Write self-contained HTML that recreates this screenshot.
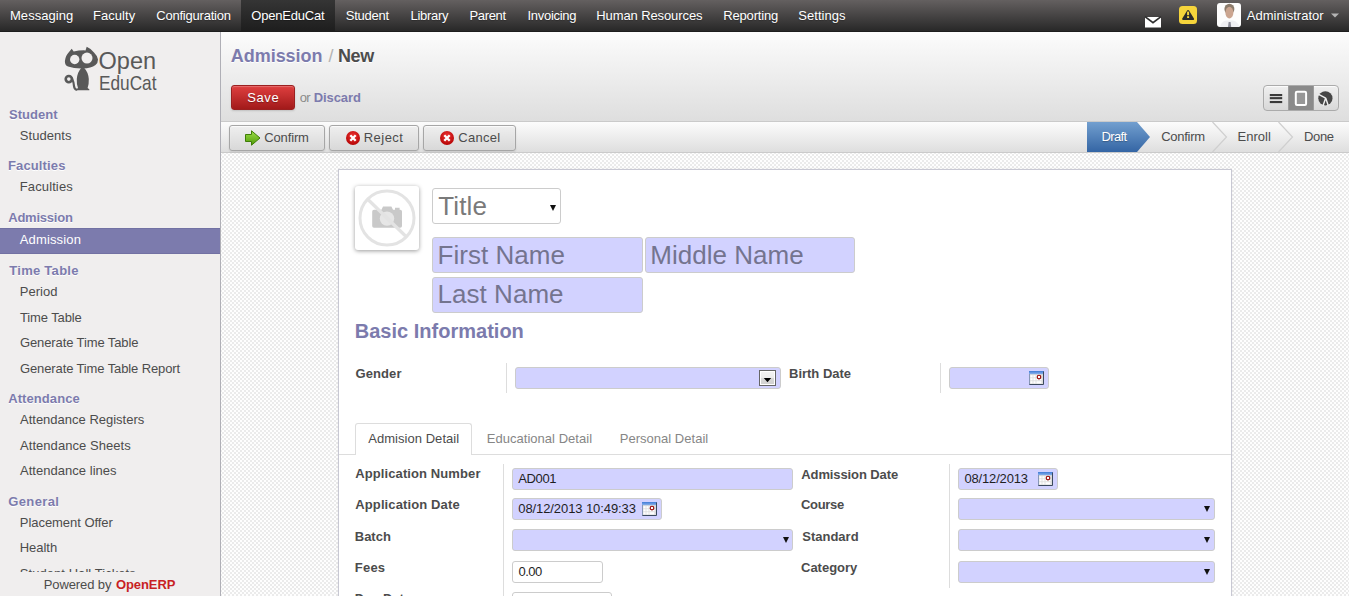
<!DOCTYPE html>
<html><head><meta charset="utf-8">
<style>
*{box-sizing:border-box;margin:0;padding:0}
html,body{width:1349px;height:596px;overflow:hidden;background:#fff;font-family:"Liberation Sans",sans-serif;font-size:13px;color:#4c4c4c}
div,svg{position:absolute}
.t{white-space:nowrap}
#top{left:0;top:0;width:1349px;height:32px;background:linear-gradient(#646060,#262626);box-shadow:inset 0 -1px 0 #1d1d1d}
#act{left:241px;top:0;width:94px;height:32px;background:linear-gradient(#353535,#1d1d1d)}
#left{left:0;top:32px;width:221px;height:564px;background:#f0eeee;border-right:1px solid #afafb6}
#sel{left:0;top:228px;width:220px;height:26px;background:#7c7bad;border-top:1px solid #7271a3;border-bottom:1px solid #7271a3}
#foot{left:0;top:572px;width:220px;height:24px;background:#f0eeee}
#hdr{left:221px;top:32px;width:1128px;height:90px;background:linear-gradient(#fcfcfc,#dedede);border-bottom:1px solid #cacaca}
#sbar{left:221px;top:122px;width:1128px;height:31px;background:linear-gradient(#fcfcfc,#dedede);border-bottom:1px solid #cacaca}
#sheetbg{left:221px;top:153px;width:1128px;height:443px;background:#fefefe}
#sheet{left:338px;top:169px;width:894px;height:440px;background:#fff;border:1px solid #c8c8d3;box-shadow:0 0 3px rgba(0,0,0,.06)}
#save{left:231px;top:85px;width:64px;height:25px;border:1px solid #9a2020;border-radius:3px;background:linear-gradient(#df3f3f,#a21a1a);box-shadow:0 1px 2px rgba(0,0,0,.15),inset 0 1px 1px rgba(255,255,255,.25)}
.btn{top:125px;height:26px;border:1px solid #a6a6a6;border-radius:3px;background:linear-gradient(#efefef,#d8d8d8);box-shadow:0 1px 2px rgba(0,0,0,.1),inset 0 1px 1px rgba(255,255,255,.8)}
#vs{left:1263px;top:85px;width:76px;height:26px;border:1px solid #ababab;border-radius:4px;background:linear-gradient(#efefef,#d8d8d8);box-shadow:inset 0 1px 1px rgba(255,255,255,.8)}
#vsa{left:1288px;top:86px;width:26px;height:24px;background:#8a8a8a;border-left:1px solid #9c9c9c;border-right:1px solid #9c9c9c}
.f{border:1px solid #ccc;border-radius:3px;background:#d2d2ff}
.w{background:#fff}
.sep{width:1px;background:#ddd}
.arr{width:0;height:0;border-left:3px solid transparent;border-right:3px solid transparent;border-top:6px solid #111}
</style></head><body>
<div id="top"></div><div id="act"></div>
<div id="left"></div><div id="sel"></div>
<!--LOGO_S--><svg width="220" height="70" style="left:0;top:35px" viewBox="0 35 220 70"><g font-family="Liberation Sans, sans-serif" fill="#595959"><text x="98.6" y="68.5" font-size="24" textLength="57.5" lengthAdjust="spacingAndGlyphs">Open</text><text x="99" y="90.4" font-size="21" textLength="57.5" lengthAdjust="spacingAndGlyphs">EduCat</text></g></svg><!--LOGO_E-->
<div id="hdr"></div><div id="sbar"></div>
<div id="sheetbg"><svg width="1128" height="443" style="left:0;top:0"><defs><pattern id="pt" x="-1" y="-1" width="4" height="4" patternUnits="userSpaceOnUse"><rect x="2" y="0" width="2" height="2" fill="#ebebeb"/><rect x="0" y="2" width="2" height="2" fill="#ebebeb"/></pattern></defs><rect width="1128" height="443" fill="url(#pt)"/></svg></div>
<div id="sheet"></div>
<div id="save"></div>
<div class="btn" style="left:229px;width:96px"></div>
<div class="btn" style="left:329px;width:90px"></div>
<div class="btn" style="left:423px;width:93px"></div>
<div id="vs"></div><div id="vsa"></div>
<!--STATE-->
<!-- form -->
<div class="w" style="left:355px;top:186px;width:64px;height:64px;border-radius:3px;box-shadow:0 1px 4px rgba(0,0,0,.4)"></div>
<!--AVATAR-->
<div class="f w" style="left:432px;top:188px;width:129px;height:36px"></div>
<div class="arr" style="left:550px;top:205px"></div>
<div class="f" style="left:432px;top:237px;width:211px;height:36px"></div>
<div class="f" style="left:645px;top:237px;width:210px;height:36px"></div>
<div class="f" style="left:432px;top:277px;width:211px;height:36px"></div>
<div class="sep" style="left:506px;top:363px;height:30px"></div>
<div class="f" style="left:515px;top:367px;width:266px;height:22px"></div>
<div class="sep" style="left:940px;top:363px;height:30px"></div>
<div class="f" style="left:949px;top:367px;width:100px;height:22px"></div>
<!-- tabs -->
<div style="left:339px;top:454px;width:892px;height:1px;background:#ddd"></div>
<div style="left:355px;top:423px;width:117px;height:32px;border:1px solid #ddd;border-bottom:none;border-radius:3px 3px 0 0;background:#fff"></div>
<div class="sep" style="left:503px;top:464px;height:140px"></div>
<div class="sep" style="left:949px;top:464px;height:124px"></div>
<div class="f" style="left:512px;top:468px;width:281px;height:22px"></div>
<div class="f" style="left:512px;top:498px;width:150px;height:22px"></div>
<div class="f" style="left:512px;top:529px;width:281px;height:22px"></div>
<div class="arr" style="left:783px;top:537px"></div>
<div class="f w" style="left:512px;top:561px;width:91px;height:22px"></div>
<div class="f w" style="left:512px;top:592px;width:100px;height:22px"></div>
<div class="f" style="left:958px;top:468px;width:100px;height:22px"></div>
<div class="f" style="left:958px;top:498px;width:257px;height:22px"></div>
<div class="arr" style="left:1204px;top:506px"></div>
<div class="f" style="left:958px;top:529px;width:257px;height:22px"></div>
<div class="arr" style="left:1204px;top:537px"></div>
<div class="f" style="left:958px;top:561px;width:257px;height:22px"></div>
<div class="arr" style="left:1204px;top:569px"></div>
<!--ICONS_START-->
<svg width="1349" height="596" style="left:0;top:0" viewBox="0 0 1349 596">
<defs>
<linearGradient id="gb" x1="0" y1="0" x2="0" y2="1"><stop offset="0" stop-color="#729fcf"/><stop offset="1" stop-color="#3465a4"/></linearGradient>
<linearGradient id="gg" x1="0" y1="0" x2="0" y2="1"><stop offset="0" stop-color="#9fe04a"/><stop offset="1" stop-color="#4e9a06"/></linearGradient>
<radialGradient id="gr" cx=".5" cy=".35" r=".7"><stop offset="0" stop-color="#e33"/><stop offset="1" stop-color="#b00000"/></radialGradient>
</defs>
<!-- logo cat -->
<g fill="#595959">
<path d="M71.7 48.7 L73.7 51.4 Q79.5 50.2 85.5 50.4 L86.7 46.7 Q91 48.5 94 52.5 Q97.6 56 98 59.5 Q98 63 95.5 65 Q91 68.2 83 68.5 Q74 68.7 68 66.6 Q64.6 65 64.9 61 Q65.5 55.5 69 52 Z"/>
<path d="M81.3 68 Q77.4 72 76.8 79 Q76.5 84 78 88 L76.4 89.2 L76.4 90.3 L89.3 90.3 L89.3 89.2 L87.6 88 Q89 84 88.8 79 Q88.2 72 84.2 68 Z"/>
</g>
<circle cx="74.7" cy="59.5" r="4.7" fill="#f0eeee"/><circle cx="87" cy="58.1" r="5.5" fill="#f0eeee"/>
<circle cx="68.8" cy="79.1" r="3.1" fill="none" stroke="#595959" stroke-width="2.6"/><path d="M72 78.4 Q73.8 82.5 74 86 Q74.2 88.8 76.4 89.7" fill="none" stroke="#595959" stroke-width="2.2" stroke-linecap="round"/>
<!-- mail -->
<rect x="1145" y="17" width="16" height="10.5" fill="#fff"/>
<path d="M1145 16.6 L1153 22.6 L1161 16.6" fill="none" stroke="#2e2e2e" stroke-width="1.7"/>
<!-- warning -->
<rect x="1179" y="6" width="18" height="18" rx="3.5" fill="#f5d43b"/>
<path d="M1188.1 11.2 L1193 19 L1183.2 19 Z" fill="#2b2b2b" stroke="#2b2b2b" stroke-width="2.2" stroke-linejoin="round"/>
<rect x="1187.1" y="11.6" width="2" height="3.6" fill="#f5d43b"/><rect x="1187.1" y="16.2" width="2" height="1.8" fill="#f5d43b"/>
<!-- avatar -->
<clipPath id="cav"><rect x="1217" y="3" width="24" height="24" rx="3"/></clipPath>
<rect x="1217" y="3" width="24" height="24" rx="3" fill="#fdfdfd"/>
<g clip-path="url(#cav)">
<path d="M1220 27 Q1221 21.5 1226 20.5 L1233 20.5 Q1238 21.5 1239.5 27 Z" fill="#efeff2"/>
<ellipse cx="1229.4" cy="9" rx="5" ry="5.2" fill="#8b7b6b"/>
<ellipse cx="1229.4" cy="12.6" rx="4" ry="5.9" fill="#cba590"/>
<path d="M1228.6 22 L1230.6 22 L1231.2 27 L1228 27 Z" fill="#8c8c98"/>
</g>
<!-- caret -->
<path d="M1331 13.5 L1339 13.5 L1335 17.5 Z" fill="#b4b4b4"/>
<!-- view switcher icons -->
<g fill="#3a3a3a"><rect x="1269.8" y="94" width="12.4" height="2.1"/><rect x="1269.8" y="97.1" width="12.4" height="2.1"/><rect x="1269.8" y="101" width="12.4" height="2.1"/></g>
<rect x="1295.8" y="91.8" width="10.3" height="13.2" rx="1.2" fill="#979797" stroke="#fff" stroke-width="2"/>
<circle cx="1325.4" cy="98.3" r="7.1" fill="#464646"/>
<path d="M1325.7 98.1 L1318.6 94.4 M1325.7 98.1 L1323 105.8 M1325.7 98.1 L1328.2 105.4" stroke="#f0f0f0" stroke-width="1.4" fill="none"/>
<!-- status buttons icons -->
<path d="M245.5 134.5 L251.5 134.5 L251.5 130.8 L260 138 L251.5 145.2 L251.5 141.5 L245.5 141.5 Z" fill="url(#gg)" stroke="#3f7d07" stroke-width="1" stroke-linejoin="round"/>
<g id="rx"><circle cx="353" cy="138" r="7" fill="url(#gr)"/><path d="M350.3 135.3 L355.7 140.7 M355.7 135.3 L350.3 140.7" stroke="#fff" stroke-width="2.3" stroke-linecap="butt"/></g>
<use href="#rx" x="94" y="0"/>
<!-- state bar -->
<path d="M1087 122 L1137 122 L1150 137 L1137 152 L1087 152 Z" fill="url(#gb)"/>
<path d="M1212.5 122 L1226.5 137 L1212.5 152" fill="none" stroke="#cfcfcf" stroke-width="1.2"/>
<path d="M1278.5 122 L1292.5 137 L1278.5 152" fill="none" stroke="#cfcfcf" stroke-width="1.2"/>
<!-- avatar placeholder -->
<circle cx="387" cy="218" r="27" fill="none" stroke="#e3e3e3" stroke-width="3"/>
<path d="M372.2 211.5 Q372.2 209.8 374 209.8 L381.5 209.8 L383 206.6 L391.4 206.6 L393 209.8 L395 209.8 L395 207.8 L399.6 207.8 L399.6 209.8 L400.2 209.8 Q402 209.8 402 211.5 L402 226 Q402 227.8 400.2 227.8 L374 227.8 Q372.2 227.8 372.2 226 Z" fill="#c9c9c9"/>
<circle cx="387" cy="218.6" r="7.2" fill="#e6e6e6"/>
<path d="M368.5 200 L405.5 236" stroke="#e3e3e3" stroke-width="3.2"/>
<!-- gender dropdown button -->
<linearGradient id="gdd" x1="0" y1="0" x2="0" y2="1"><stop offset="0" stop-color="#f3f3f3"/><stop offset=".5" stop-color="#ececec"/><stop offset=".5" stop-color="#d9d9d9"/><stop offset="1" stop-color="#d2d2d2"/></linearGradient>
<rect x="759.5" y="370.5" width="16" height="15" fill="#fff" stroke="#666" stroke-width="1"/>
<rect x="761" y="372" width="13" height="12" fill="url(#gdd)"/>
<path d="M763.8 378.1 L771.2 378.1 L767.5 382.3 Z" fill="#000"/>
<!-- calendar icons -->
<linearGradient id="gcal" x1="0" y1="0" x2="0" y2="1"><stop offset="0" stop-color="#3f7bd6"/><stop offset="1" stop-color="#8ab2ec"/></linearGradient>
<defs><g id="cal"><rect x="0" y="0" width="15" height="14" fill="#dcdcdc"/><rect x="0" y="0" width="15" height="3.2" fill="url(#gcal)"/>
<g fill="#fff"><rect x="1.4" y="4.2" width="2.2" height="2.2"/><rect x="4.4" y="4.2" width="2.2" height="2.2"/><rect x="7.4" y="4.2" width="2" height="2.2"/><rect x="1.4" y="7.2" width="2.2" height="2.2"/><rect x="4.4" y="7.2" width="2.2" height="2.2"/><rect x="7.4" y="7.2" width="2.2" height="2.2"/><rect x="10.4" y="7.8" width="2.2" height="1.6"/><rect x="1.4" y="10.2" width="2.2" height="2.2"/><rect x="4.4" y="10.2" width="2.2" height="2.2"/><rect x="7.4" y="10.2" width="5" height="2.2"/></g>
<path d="M0.5 3 V14" stroke="#8797b6" stroke-width="1"/><path d="M14.5 0.5 V13.5 H0.5" stroke="#3c4a5e" stroke-width="1" fill="none"/>
<circle cx="10" cy="6.1" r="1.8" fill="#fff" stroke="#960000" stroke-width="1.1"/></g></defs>
<use href="#cal" x="1029" y="371"/>
<use href="#cal" x="642" y="502"/>
<use href="#cal" x="1038" y="472"/>
</svg>
<!--ICONS_END-->
<div class="t" style="left:10px;top:8px;font-size:13px;line-height:16px;color:#fff;letter-spacing:0.04px;text-shadow:0 1px 1px rgba(0,0,0,.25);">Messaging</div>
<div class="t" style="left:93px;top:8px;font-size:13px;line-height:16px;color:#fff;letter-spacing:0.04px;text-shadow:0 1px 1px rgba(0,0,0,.25);">Faculty</div>
<div class="t" style="left:156.25px;top:8px;font-size:13px;line-height:16px;color:#fff;letter-spacing:-0.22px;text-shadow:0 1px 1px rgba(0,0,0,.25);">Configuration</div>
<div class="t" style="left:251.25px;top:8px;font-size:13px;line-height:16px;color:#fff;letter-spacing:-0.2px;text-shadow:0 1px 1px rgba(0,0,0,.25);">OpenEduCat</div>
<div class="t" style="left:345.75px;top:8px;font-size:13px;line-height:16px;color:#fff;letter-spacing:-0.25px;text-shadow:0 1px 1px rgba(0,0,0,.25);">Student</div>
<div class="t" style="left:410.5px;top:8px;font-size:13px;line-height:16px;color:#fff;letter-spacing:-0.3px;text-shadow:0 1px 1px rgba(0,0,0,.25);">Library</div>
<div class="t" style="left:469.5px;top:8px;font-size:13px;line-height:16px;color:#fff;letter-spacing:-0.34px;text-shadow:0 1px 1px rgba(0,0,0,.25);">Parent</div>
<div class="t" style="left:527.5px;top:8px;font-size:13px;line-height:16px;color:#fff;letter-spacing:-0.29px;text-shadow:0 1px 1px rgba(0,0,0,.25);">Invoicing</div>
<div class="t" style="left:596.25px;top:8px;font-size:13px;line-height:16px;color:#fff;letter-spacing:-0.1px;text-shadow:0 1px 1px rgba(0,0,0,.25);">Human Resources</div>
<div class="t" style="left:723.25px;top:8px;font-size:13px;line-height:16px;color:#fff;letter-spacing:-0.16px;text-shadow:0 1px 1px rgba(0,0,0,.25);">Reporting</div>
<div class="t" style="left:798.25px;top:8px;font-size:13px;line-height:16px;color:#fff;letter-spacing:0.05px;text-shadow:0 1px 1px rgba(0,0,0,.25);">Settings</div>
<div class="t" style="left:1246.75px;top:8px;font-size:13px;line-height:16px;color:#fff;letter-spacing:0.03px;text-shadow:0 1px 1px rgba(0,0,0,.25);">Administrator</div>
<div class="t" style="left:9px;top:107px;font-size:13px;line-height:16px;color:#7c7bad;font-weight:bold;letter-spacing:0.02px;text-shadow:0 1px 0 #fff;">Student</div>
<div class="t" style="left:8px;top:158px;font-size:13px;line-height:16px;color:#7c7bad;font-weight:bold;letter-spacing:0.13px;text-shadow:0 1px 0 #fff;">Faculties</div>
<div class="t" style="left:8.25px;top:210px;font-size:13px;line-height:16px;color:#7c7bad;font-weight:bold;letter-spacing:-0.23px;text-shadow:0 1px 0 #fff;">Admission</div>
<div class="t" style="left:9.25px;top:263px;font-size:13px;line-height:16px;color:#7c7bad;font-weight:bold;letter-spacing:0.28px;text-shadow:0 1px 0 #fff;">Time Table</div>
<div class="t" style="left:8.25px;top:391px;font-size:13px;line-height:16px;color:#7c7bad;font-weight:bold;letter-spacing:0.07px;text-shadow:0 1px 0 #fff;">Attendance</div>
<div class="t" style="left:8.25px;top:494px;font-size:13px;line-height:16px;color:#7c7bad;font-weight:bold;letter-spacing:0.38px;text-shadow:0 1px 0 #fff;">General</div>
<div class="t" style="left:19.75px;top:128px;font-size:13px;line-height:16px;color:#4c4c4c;letter-spacing:0.07px;">Students</div>
<div class="t" style="left:19.75px;top:179px;font-size:13px;line-height:16px;color:#4c4c4c;letter-spacing:0.12px;">Faculties</div>
<div class="t" style="left:19.75px;top:284px;font-size:13px;line-height:16px;color:#4c4c4c;letter-spacing:0.01px;">Period</div>
<div class="t" style="left:20px;top:310px;font-size:13px;line-height:16px;color:#4c4c4c;letter-spacing:-0.12px;">Time Table</div>
<div class="t" style="left:20px;top:335px;font-size:13px;line-height:16px;color:#4c4c4c;letter-spacing:-0.11px;">Generate Time Table</div>
<div class="t" style="left:20px;top:361px;font-size:13px;line-height:16px;color:#4c4c4c;letter-spacing:-0.12px;">Generate Time Table Report</div>
<div class="t" style="left:20px;top:412px;font-size:13px;line-height:16px;color:#4c4c4c;">Attendance Registers</div>
<div class="t" style="left:20px;top:438px;font-size:13px;line-height:16px;color:#4c4c4c;letter-spacing:0.05px;">Attendance Sheets</div>
<div class="t" style="left:20px;top:463px;font-size:13px;line-height:16px;color:#4c4c4c;letter-spacing:0.03px;">Attendance lines</div>
<div class="t" style="left:19.75px;top:515px;font-size:13px;line-height:16px;color:#4c4c4c;letter-spacing:-0.04px;">Placement Offer</div>
<div class="t" style="left:19.75px;top:540px;font-size:13px;line-height:16px;color:#4c4c4c;letter-spacing:-0.03px;">Health</div>
<div class="t" style="left:19.75px;top:566px;font-size:13px;line-height:16px;color:#4c4c4c;letter-spacing:0.06px;">Student Hall Tickets</div>
<div class="t" style="left:19.75px;top:232px;font-size:13px;line-height:16px;color:#fff;letter-spacing:0.15px;">Admission</div>
<div class="t" style="left:230.75px;top:46px;font-size:18px;line-height:21px;color:#7c7bad;font-weight:bold;letter-spacing:-0.03px;text-shadow:0 1px 0 #fff;">Admission</div>
<div class="t" style="left:328.5px;top:46px;font-size:18px;line-height:21px;color:#b3b3b3;">/</div>
<div class="t" style="left:338px;top:46px;font-size:18px;line-height:21px;color:#4c4c4c;font-weight:bold;letter-spacing:-0.39px;text-shadow:0 1px 0 #fff;">New</div>
<div class="t" style="left:247.25px;top:90px;font-size:13px;line-height:16px;color:#fff;letter-spacing:0.6px;text-shadow:0 1px 1px rgba(0,0,0,.3);">Save</div>
<div class="t" style="left:299.75px;top:90px;font-size:13px;line-height:16px;color:#8a8a8a;letter-spacing:-0.7px;">or</div>
<div class="t" style="left:313.75px;top:90px;font-size:13px;line-height:16px;color:#7c7bad;font-weight:bold;letter-spacing:-0.09px;">Discard</div>
<div class="t" style="left:264.25px;top:130px;font-size:13px;line-height:16px;color:#4c4c4c;letter-spacing:-0.14px;">Confirm</div>
<div class="t" style="left:363.75px;top:130px;font-size:13px;line-height:16px;color:#4c4c4c;letter-spacing:0.47px;">Reject</div>
<div class="t" style="left:458.25px;top:130px;font-size:13px;line-height:16px;color:#4c4c4c;letter-spacing:0.3px;">Cancel</div>
<div class="t" style="left:1101.5px;top:129px;font-size:13px;line-height:16px;color:#fff;letter-spacing:-0.63px;text-shadow:0 1px 1px rgba(0,0,0,.25);">Draft</div>
<div class="t" style="left:1161.25px;top:129px;font-size:13px;line-height:16px;color:#4c4c4c;letter-spacing:-0.29px;">Confirm</div>
<div class="t" style="left:1237.5px;top:129px;font-size:13px;line-height:16px;color:#4c4c4c;letter-spacing:0.03px;">Enroll</div>
<div class="t" style="left:1304px;top:129px;font-size:13px;line-height:16px;color:#4c4c4c;letter-spacing:-0.35px;">Done</div>
<div class="t" style="left:438.25px;top:192px;font-size:26px;line-height:29px;color:#7a7a7a;letter-spacing:0.15px;">Title</div>
<div class="t" style="left:437.5px;top:241px;font-size:26px;line-height:29px;color:#74748f;letter-spacing:0.04px;">First Name</div>
<div class="t" style="left:650.25px;top:241px;font-size:26px;line-height:29px;color:#74748f;letter-spacing:0.02px;">Middle Name</div>
<div class="t" style="left:437.5px;top:280px;font-size:26px;line-height:29px;color:#74748f;letter-spacing:0.04px;">Last Name</div>
<div class="t" style="left:354.75px;top:320px;font-size:20px;line-height:23px;color:#7c7bad;font-weight:bold;letter-spacing:0.01px;">Basic Information</div>
<div class="t" style="left:355.5px;top:366px;font-size:13px;line-height:16px;color:#4c4c4c;font-weight:bold;letter-spacing:0.09px;">Gender</div>
<div class="t" style="left:789px;top:366px;font-size:13px;line-height:16px;color:#4c4c4c;font-weight:bold;letter-spacing:-0.01px;">Birth Date</div>
<div class="t" style="left:368.25px;top:431px;font-size:13px;line-height:16px;color:#4c4c4c;letter-spacing:0.04px;">Admision Detail</div>
<div class="t" style="left:486.75px;top:431px;font-size:13px;line-height:16px;color:#868686;letter-spacing:0.03px;">Educational Detail</div>
<div class="t" style="left:619.75px;top:431px;font-size:13px;line-height:16px;color:#868686;letter-spacing:0.02px;">Personal Detail</div>
<div class="t" style="left:355.25px;top:466px;font-size:13px;line-height:16px;color:#4c4c4c;font-weight:bold;letter-spacing:0.1px;">Application Number</div>
<div class="t" style="left:355.25px;top:497px;font-size:13px;line-height:16px;color:#4c4c4c;font-weight:bold;letter-spacing:0.12px;">Application Date</div>
<div class="t" style="left:354.75px;top:529px;font-size:13px;line-height:16px;color:#4c4c4c;font-weight:bold;letter-spacing:-0.01px;">Batch</div>
<div class="t" style="left:354.75px;top:560px;font-size:13px;line-height:16px;color:#4c4c4c;font-weight:bold;letter-spacing:0.23px;">Fees</div>
<div class="t" style="left:354.75px;top:591px;font-size:13px;line-height:16px;color:#4c4c4c;font-weight:bold;">Due Date</div>
<div class="t" style="left:518.25px;top:471px;font-size:13px;line-height:16px;color:#1f1f1f;letter-spacing:-0.35px;">AD001</div>
<div class="t" style="left:518.25px;top:501px;font-size:13px;line-height:16px;color:#1f1f1f;letter-spacing:-0.09px;">08/12/2013 10:49:33</div>
<div class="t" style="left:518.5px;top:564px;font-size:13px;line-height:16px;color:#1f1f1f;letter-spacing:-0.49px;">0.00</div>
<div class="t" style="left:801.25px;top:467px;font-size:13px;line-height:16px;color:#4c4c4c;font-weight:bold;letter-spacing:-0.1px;">Admission Date</div>
<div class="t" style="left:801px;top:497px;font-size:13px;line-height:16px;color:#4c4c4c;font-weight:bold;letter-spacing:-0.31px;">Course</div>
<div class="t" style="left:802.25px;top:529px;font-size:13px;line-height:16px;color:#4c4c4c;font-weight:bold;">Standard</div>
<div class="t" style="left:801px;top:560px;font-size:13px;line-height:16px;color:#4c4c4c;font-weight:bold;letter-spacing:-0.01px;">Category</div>
<div class="t" style="left:964.5px;top:471px;font-size:13px;line-height:16px;color:#1f1f1f;letter-spacing:-0.17px;">08/12/2013</div>
<div id="foot"></div>
<div class="t" style="left:43.75px;top:577px;font-size:13px;line-height:16px;color:#4c4c4c;letter-spacing:-0.11px;">Powered by</div>
<div class="t" style="left:116px;top:577px;font-size:13px;line-height:16px;color:#c81f24;font-weight:bold;letter-spacing:-0.09px;">OpenERP</div>
</body></html>
